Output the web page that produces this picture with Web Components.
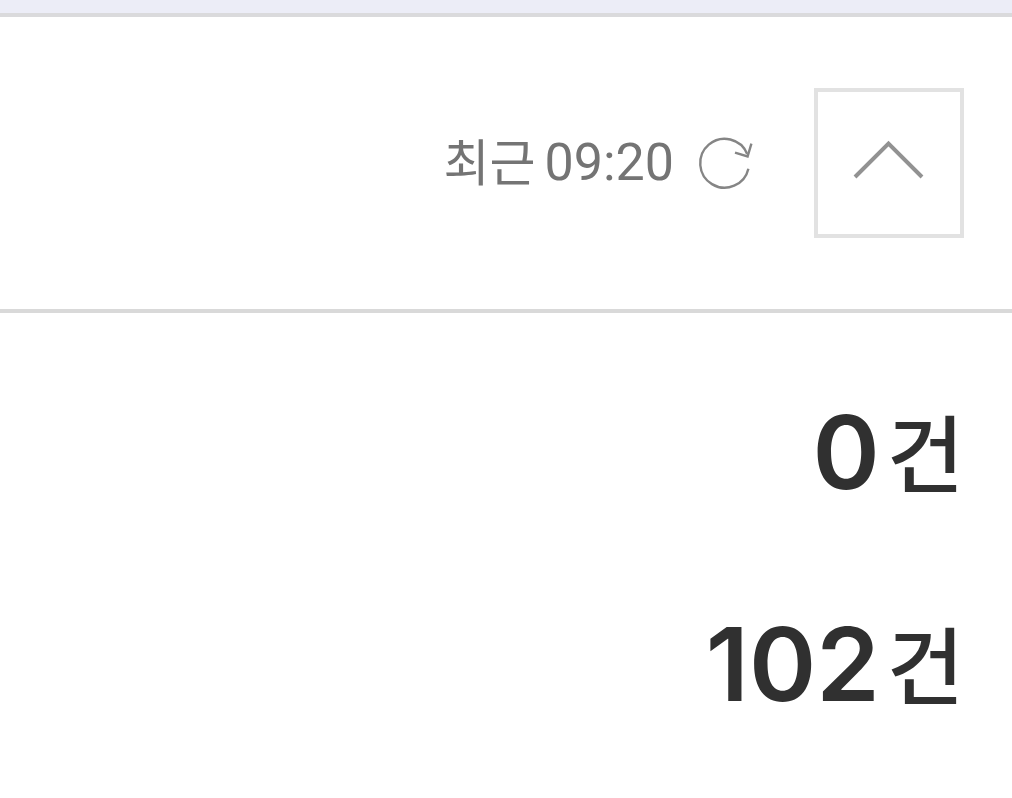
<!DOCTYPE html>
<html lang="ko">
<head>
<meta charset="utf-8">
<meta name="viewport" content="width=device-width, initial-scale=1">
<title>현황</title>
<style>
body { margin: 0; background: #fff; font-family: Inter, "Noto Sans CJK KR", sans-serif; }
</style>
</head>
<body>
<status-panel>
  <panel-header slot="header">
    <refresh-time>최근<time slot="time" datetime="09:20">09:20</time></refresh-time>
    <fold-button></fold-button>
  </panel-header>
  <count-row>0<span slot="unit">건</span></count-row>
  <count-row>102<span slot="unit">건</span></count-row>
</status-panel>
<script>
const define = (name, html) => {
  const template = document.createElement('template');
  template.innerHTML = html;
  customElements.define(name, class extends HTMLElement {
    constructor() {
      super();
      this.attachShadow({ mode: 'open' }).append(template.content.cloneNode(true));
    }
  });
};

define('status-panel', `
  <style>
    :host { display: block; border-top: 13px solid #ecedf7; }
    section { border-top: 4px solid #dadadc; }
    .rows { display: flex; flex-direction: column; gap: 84px; padding: 75px 48px; }
  </style>
  <section><slot name="header"></slot><div class="rows"><slot></slot></div></section>`);

define('panel-header', `
  <style>
    :host { display: flex; justify-content: flex-end; align-items: center; gap: 56px;
      padding: 71px 48px; border-bottom: 4px solid #d9d9d9; }
  </style>
  <slot></slot>`);

define('refresh-time', `
  <style>
    :host { display: flex; align-items: center; color: #747474; line-height: 64px; }
    .label { margin-right: 9px; font-size: 50px; }
    .time { margin-right: 20px; font-family: Roboto, sans-serif; font-size: 52px; }
    button { display: block; padding: 0; border: 0; background: none; color: #858585; }
    svg { display: block; }
  </style>
  <span class="label"><slot></slot></span>
  <span class="time"><slot name="time"></slot></span>
  <button type="button" aria-label="새로고침">
    <svg width="64" height="64" viewBox="0 0 64 64" fill="none" stroke="currentColor" stroke-width="2.4">
      <path d="M54.4 37.7A24.4 24.4 0 1 1 53.2 23"/>
      <path d="M41 21.7L53.6 25.5L57.4 12.7"/>
    </svg>
  </button>`);

define('fold-button', `
  <style>
    :host { display: block; }
    button { display: grid; place-items: center; box-sizing: border-box; width: 150px; height: 150px;
      padding: 0; border: 4px solid #e2e2e2; background: #fff; color: #929292; }
    svg { display: block; }
  </style>
  <button type="button" aria-label="접기">
    <svg width="80" height="80" viewBox="0 0 80 80" fill="none" stroke="currentColor" stroke-width="4">
      <path d="M6 54L39.5 20.5L73 54"/>
    </svg>
  </button>`);

define('count-row', `
  <style>
    :host { display: flex; justify-content: flex-end; align-items: center; gap: 7px;
      color: #303030; font-size: 102px; font-weight: 600; line-height: 128px; }
    .unit { padding-top: 8px; font-size: 84px; font-weight: 500; line-height: 120px; }
  </style>
  <span><slot></slot></span><span class="unit"><slot name="unit"></slot></span>`);
</script>
</body>
</html>
